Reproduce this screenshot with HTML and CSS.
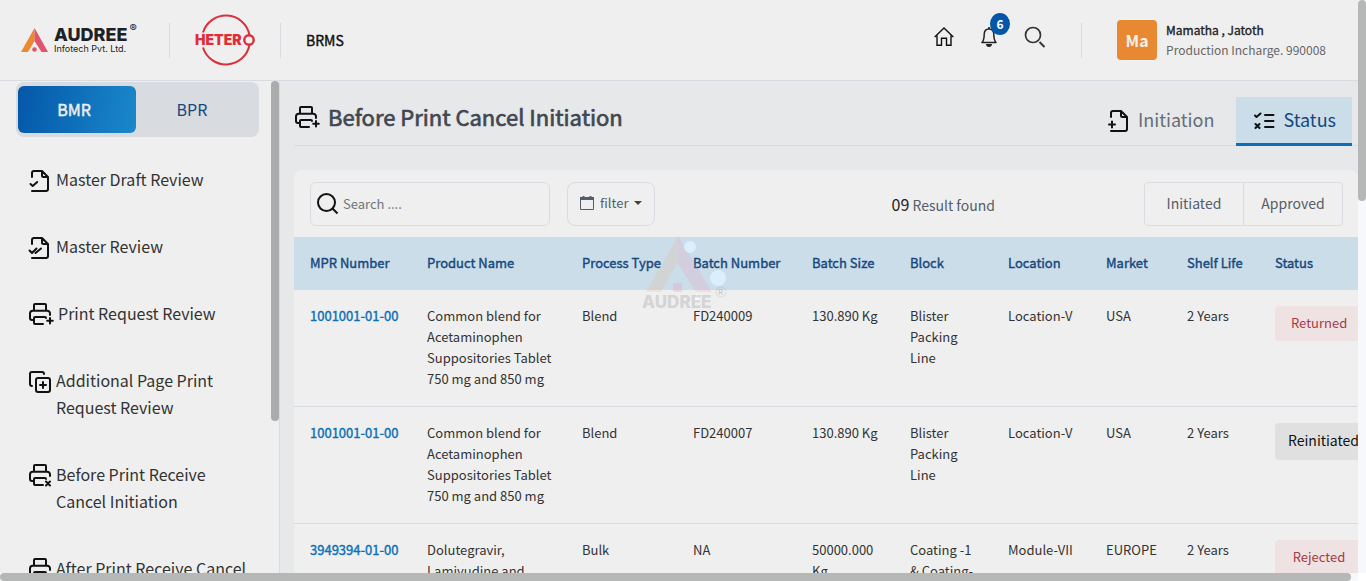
FILE: index.html
```html
<!DOCTYPE html>
<html lang="en">
<head>
<meta charset="utf-8">
<title>BRMS - Before Print Cancel Initiation</title>
<link rel="stylesheet" href="styles.css">
</head>
<body>
<svg class="defs" aria-hidden="true">
  <symbol id="printer" viewBox="0 0 26 24">
    <path d="M6 7.500V3a1 1 0 0 1 1-1h10a1 1 0 0 1 1 1v4.500M4.500 18H4a2 2 0 0 1-2-2v-4.500A2.800 2.800 0 0 1 4.800 8.700h14.400A2.800 2.800 0 0 1 22 11.500V13M15 22H7a1 1 0 0 1-1-1v-5a1 1 0 0 1 1-1h10a1 1 0 0 1 1 1"/>
  </symbol>
  <symbol id="file" viewBox="0 0 24 26">
    <path d="M4 9V5a2 2 0 0 1 2-2h8l6 6v12a2 2 0 0 1-2 2H4M14 3v4.500a1.500 1.500 0 0 0 1.500 1.500H20"/>
  </symbol>
</svg>
<div class="window">
  <div class="app">
    <header class="topbar">
      <a class="audree" href="#" aria-label="Audree Infotech">
        <svg class="audree-mark" viewBox="0 0 27 24"><path fill="#e98a30" d="M13.500 0v13L7 24H0z"/><path fill="#e2546b" d="M13.500 0 27 24h-6.500l-7-11z"/><circle cx="13.500" cy="21.500" r="2.300" fill="#e2546b"/></svg>
        <span class="audree-words"><span class="audree-name">AUDREE<sup>®</sup></span><span class="audree-sub">Infotech Pvt. Ltd.</span></span>
      </a>
      <span class="rule"></span>
      <a class="hetero" href="#" aria-label="Hetero">
        <svg viewBox="0 0 62 52"><g fill="none" stroke="#dc2f3a" stroke-width="2"><path d="M9 18.500A24 24 0 0 1 55.500 21M9 33.500A24 24 0 0 0 55.500 31"/><circle cx="55" cy="26" r="4.700" stroke-width="2.400"/></g><text class="hetero-text" x="1" y="31">HETER</text></svg>
      </a>
      <span class="rule"></span>
      <span class="product heavy">BRMS</span>
      <nav class="tools">
        <a href="#" aria-label="Home"><svg width="20" height="20" viewBox="0 0 20 20"><path fill="none" stroke="#111" stroke-width="1.400" d="M.7 10 10 1l9.300 9M3 8.500V18.300h4.500v-7h5v7H17V8.500"/></svg></a>
        <a class="bell" href="#" aria-label="Notifications, 6"><svg width="16" height="20" viewBox="0 0 16 20"><path fill="none" stroke="#222" stroke-width="1.500" stroke-linejoin="round" d="M8 2C4.800 2 3.200 4.500 3.200 7.500 3.200 12 2.300 14 1 15.500h14C13.700 14 12.800 12 12.800 7.500 12.800 4.500 11.200 2 8 2z"/><path fill="#222" d="M7.200 0h1.600v2H7.200zM5 17h6c0 2-1.300 3-3 3s-3-1-3-3z"/></svg><span class="badge">6</span></a>
        <a href="#" aria-label="Search"><svg width="22" height="22" viewBox="0 0 22 22"><g fill="none" stroke="#333" stroke-width="1.700"><circle cx="9" cy="9" r="7.500"/><path stroke-width="2" d="m15.500 16 5 5"/></g></svg></a>
      </nav>
      <span class="rule"></span>
      <div class="user">
        <span class="avatar">Ma</span>
        <span class="user-words"><span class="user-name heavy">Mamatha , Jatoth</span><span class="user-role">Production Incharge. 990008</span></span>
      </div>
    </header>
    <div class="body">
      <aside class="sidebar">
        <div class="side-main">
          <div class="switch"><button class="on heavy">BMR</button><button>BPR</button></div>
          <nav class="menu">
            <a href="#"><svg class="ico" width="28" height="26" viewBox="0 0 28 26"><use href="#file" width="24" height="26"/><path d="m2.500 16 2.200 2 4.500-4"/></svg>Master Draft Review</a>
            <a href="#"><svg class="ico" width="28" height="26" viewBox="0 0 28 26"><use href="#file" width="24" height="26"/><path d="m1.500 15.500 2.500 2.500 4.500-4.500M7.500 18l5.500-4.500"/></svg>Master Review</a>
            <a class="wide" href="#"><svg class="ico" width="28" height="26" viewBox="0 0 28 26"><use href="#printer" width="26" height="24"/><path d="M22 16v5.500M19.200 18.800h5.600"/></svg>Print Request Review</a>
            <a href="#"><svg class="ico" width="28" height="26" viewBox="0 0 28 26"><path d="M4 17a2 2 0 0 1-2-2V5a2 2 0 0 1 2-2h10a2 2 0 0 1 2 2"/><rect x="8" y="9" width="14" height="14" rx="2"/><path d="M15 13v6M12 16h6"/></svg>Additional Page Print Request Review</a>
            <a href="#"><svg class="ico" width="28" height="26" viewBox="0 0 28 26"><use href="#printer" width="26" height="24"/><path d="m18 18.500 4 4m0-4-4 4"/></svg>Before Print Receive Cancel Initiation</a>
            <a href="#"><svg class="ico" width="28" height="26" viewBox="0 0 28 26"><use href="#printer" width="26" height="24"/><path d="m18 18.500 4 4m0-4-4 4"/></svg>After Print Receive Cancel Initiation</a>
          </nav>
        </div>
        <div class="side-scroll"></div>
      </aside>
      <main class="content">
        <div class="title-row">
          <h1 class="heavy"><svg class="ico" width="28" height="26" viewBox="0 0 28 26"><use href="#printer" width="26" height="24"/><path d="M22 16v5.500M19.200 18.800h5.600"/></svg>Before Print Cancel Initiation</h1>
          <nav class="tabs">
            <a href="#"><svg class="ico" width="24" height="26" viewBox="0 0 24 26"><use href="#file" width="24" height="26"/><path d="M5 13.500v6M2 16.500h6"/></svg>Initiation</a>
            <a class="current" href="#"><svg class="ico" width="24" height="20" viewBox="0 0 24 20"><path d="m3 4.500 1.500 1.500L8.500 2.500M3.500 13l4 4m0-4-4 4M13 4h8.500M13 10h8.500M13 16h8.500"/></svg>Status</a>
          </nav>
        </div>
        <section class="card">
          <div class="filters">
            <label class="search"><svg width="22" height="22" viewBox="0 0 22 22"><g fill="none" stroke="#111" stroke-width="2"><circle cx="9.500" cy="9.500" r="8.500"/><path d="m15.500 15.500 5 5"/></g></svg><input type="text" placeholder="Search ...." aria-label="Search"></label>
            <button class="filter"><svg width="14" height="14" viewBox="0 0 14 14"><path fill="none" stroke="#555d68" d="M.5 1.500h13v12H.5z"/><path fill="#555d68" d="M0 1h14v3H0zM2.500 0h2v2h-2zM9.500 0h2v2h-2z"/></svg>filter<span class="caret"></span></button>
            <p class="result"><span>09</span> Result found</p>
            <div class="pair"><button>Initiated</button><button>Approved</button></div>
          </div>
          <table>
            <colgroup><col class="c-mpr"><col class="c-product"><col class="c-process"><col class="c-batch"><col class="c-mid"><col class="c-mid"><col class="c-mid"><col class="c-market"><col class="c-shelf"><col></colgroup>
            <thead><tr class="heavy"><th>MPR Number</th><th>Product Name</th><th>Process Type</th><th>Batch Number</th><th>Batch Size</th><th>Block</th><th>Location</th><th>Market</th><th>Shelf Life</th><th>Status</th></tr></thead>
            <tbody>
              <tr><td><a class="heavy" href="#">1001001-01-00</a></td><td>Common blend for Acetaminophen Suppositories Tablet 750 mg and 850 mg</td><td>Blend</td><td>FD240009</td><td>130.890 Kg</td><td>Blister Packing Line</td><td>Location-V</td><td>USA</td><td>2 Years</td><td><span class="pill red">Returned</span></td></tr>
              <tr><td><a class="heavy" href="#">1001001-01-00</a></td><td>Common blend for Acetaminophen Suppositories Tablet 750 mg and 850 mg</td><td>Blend</td><td>FD240007</td><td>130.890 Kg</td><td>Blister Packing Line</td><td>Location-V</td><td>USA</td><td>2 Years</td><td><span class="pill grey">Reinitiated</span></td></tr>
              <tr><td><a class="heavy" href="#">3949394-01-00</a></td><td>Dolutegravir, Lamivudine and</td><td>Bulk</td><td>NA</td><td>50000.000 Kg</td><td>Coating -1 &amp;&nbsp;Coating-</td><td>Module-VII</td><td>EUROPE</td><td>2 Years</td><td><span class="pill red">Rejected</span></td></tr>
            </tbody>
          </table>
        </section>
      </main>
    </div>
    <svg class="watermark" width="88" height="76" viewBox="0 0 88 76" aria-hidden="true">
      <path fill="#f3a56a" opacity=".16" d="M36 0v26L19 56H4z"/><path fill="#f58aa8" opacity=".18" d="m36 0 34 56H54L36 28z"/><path fill="#f58aa8" opacity=".25" d="M31 47h9v9h-9z"/>
      <g fill="#dff2ff" opacity=".8"><circle cx="48" cy="11" r="6"/><circle cx="76" cy="42" r="8"/></g><path fill="#fff" opacity=".7" d="m55 56 3 9h-6z"/>
      <text class="mark-name" x="0" y="72">AUDREE</text><circle cx="79" cy="56" r="5" fill="none" stroke="#888" opacity=".2"/><text class="mark-r" x="76" y="59">R</text>
    </svg>
  </div>
  <div class="vtrack"><div class="vthumb"></div></div>
  <div class="htrack"><div class="hthumb"></div></div>
</div>
</body>
</html>
```
FILE: styles.css
```css
* { box-sizing: border-box; }
body { margin: 0; font-family: "Noto Sans CJK SC", "Noto Sans", sans-serif; font-size: 12px; color: #333; background: #fff; }
a { color: inherit; text-decoration: none; }
button, input { font: inherit; color: inherit; background: none; border: 0; padding: 0; margin: 0; }
.heavy { -webkit-text-stroke: 0.03em currentColor; }
.defs { position: absolute; width: 0; height: 0; }
.ico { flex: none; fill: none; stroke: #111; stroke-width: 2; stroke-linecap: round; stroke-linejoin: round; }

.window { display: grid; grid-template-columns: minmax(0, 1fr) 8px; grid-template-rows: minmax(0, 1fr) 8px; height: 100vh; overflow: hidden; }
.app { position: relative; display: flex; flex-direction: column; overflow: hidden; background: #e6e8ea; }
.vtrack, .htrack { background: #f6f8fb; }
.vthumb { height: 35%; background: #b5b8b7; border-radius: 4px; }
.hthumb { width: 99.5%; height: 8px; background: #b5b8b7; border-radius: 4px; }
.htrack { grid-column: 1; }

.topbar { flex: none; display: flex; align-items: center; height: 81px; padding: 0 32px 0 21px; background: #efefef; border-bottom: 1px solid #d8dbe1; }
.rule { width: 1px; height: 35px; background: #d8dbe1; }
.audree { display: flex; align-items: center; gap: 6px; width: 148px; color: #1f2224; font-family: Inter, sans-serif; }
.audree-mark { width: 27px; height: 24px; }
.audree-words { display: flex; flex-direction: column; padding-top: 2px; }
.audree-name { font-size: 18px; font-weight: 800; line-height: 16px; white-space: nowrap; }
.audree-name sup { padding-left: 2px; font-size: 11px; font-weight: 500; line-height: 0; vertical-align: 9px; }
.audree-sub { font-size: 9px; line-height: 12px; }
.hetero { margin: 0 24px; }
.hetero svg { display: block; width: 62px; height: 52px; }
.hetero-text { font: 900 14px Inter, sans-serif; fill: #dc2f3a; }
.product { margin-left: 25px; font-size: 14px; color: #111; }
.tools { display: flex; align-items: center; gap: 27px; margin: 0 35px 6px auto; }
.tools a { position: relative; display: block; }
.tools svg { display: block; }
.badge { position: absolute; left: 9px; top: -14px; width: 20px; height: 22px; border-radius: 50%; background: #0457a8; color: #fff; font-size: 12px; font-weight: 700; line-height: 22px; text-align: center; }
.user { display: flex; align-items: center; gap: 9px; margin-left: 35px; }
.avatar { width: 40px; height: 40px; border-radius: 4px; background: #e88830; color: #f3efeb; font-size: 16px; font-weight: 700; line-height: 40px; text-align: center; }
.user-words { display: flex; flex-direction: column; line-height: 20px; white-space: nowrap; }
.user-name { color: #222; }
.user-role { color: #666; }

.body { flex: 1; min-height: 0; display: flex; }
.sidebar { flex: none; width: 280px; display: flex; background: #efefef; border-right: 1px solid #d8dbe1; }
.side-main { flex: 1; padding: 1px 0 0 16px; }
.side-scroll { width: 8px; height: 340px; border-radius: 4px; background: #ababab; }
.switch { display: grid; grid-template-columns: 1fr 1fr; margin-right: 12px; padding: 4px 5px 4px 2px; border-radius: 8px; background: #d8dbe0; }
.switch button { height: 47px; padding: 0 6px 2px 0; border-radius: 6px; font-size: 16px; color: #15487c; }
.switch .on { background: linear-gradient(100deg, #0457a8, #1a88cb); color: #eee; }
.menu { display: flex; flex-direction: column; gap: 40px; padding: 29px 20px 0 12px; font-size: 16px; line-height: 27px; }
.menu a { display: flex; align-items: flex-start; }
.menu .ico { margin: 2px 0 -2px; }
.menu .wide { gap: 2px; }

.content { flex: 1; min-width: 0; padding: 16px 0 0 14px; }
.title-row { display: flex; justify-content: space-between; height: 49px; padding-right: 6px; border-bottom: 1px solid #d8dbe1; }
h1 { display: flex; align-items: center; gap: 6px; margin: 0 0 11px; font-size: 22px; font-weight: 400; color: #414750; }
h1 .ico { margin-top: 4px; }
.tabs { display: flex; font-size: 18px; color: #656d78; }
.tabs a { display: flex; align-items: center; gap: 7px; height: 49px; padding: 0 22px 5px 16px; }
.tabs .ico { margin-top: 4px; }
.tabs .current { padding: 0 16px 2px; background: #cbdde9; border-bottom: 3px solid #0d6fb8; color: #15487c; }
.card { margin-top: 24px; overflow: hidden; background: #efefef; border-radius: 8px 8px 0 0; }
.filters { display: flex; align-items: center; padding: 12px 15px 11px 16px; color: #555d68; font-size: 13px; }
.search { display: flex; align-items: center; gap: 4px; width: 240px; height: 44px; padding: 0 6px; border: 1px solid #d8dbe1; border-radius: 6px; }
.search input { flex: 1; min-width: 0; outline: 0; padding-bottom: 2px; }
.search input::placeholder { color: #70757a; opacity: 1; }
.filter { display: flex; align-items: center; gap: 6px; height: 44px; margin-left: 17px; padding: 0 12px 3px; border: 1px solid #d8dbe1; border-radius: 8px; }
.caret { border: 4px solid transparent; border-top-color: #444; border-bottom: 0; }
.result { margin: 0 auto; padding-left: 87px; font-size: 14px; }
.result span { color: #222; font-size: 16px; }
.pair { display: flex; width: 199px; height: 44px; border: 1px solid #d8dbe1; border-radius: 4px; font-size: 14px; }
.pair button { flex: 1; padding-bottom: 2px; }
.pair button + button { border-left: 1px solid #d8dbe1; }

table { width: 100%; table-layout: fixed; border-collapse: collapse; font-size: 13px; line-height: 21px; }
th, td { padding: 15px 0 17px 16px; text-align: left; vertical-align: top; font-weight: 400; }
th { background: #cbdde9; color: #15487c; white-space: nowrap; }
td { border-bottom: 1px solid #d8dbe1; }
td:nth-child(2) { padding-right: 8px; }
td:nth-child(5), td:nth-child(6) { padding-right: 12px; }
td:last-child { padding-top: 16px; }
td a { color: #0d6fb8; }
.c-mpr { width: 117px; }
.c-product { width: 155px; }
.c-process { width: 111px; }
.c-batch { width: 119px; }
.c-mid { width: 98px; }
.c-market { width: 81px; }
.c-shelf { width: 88px; }
.pill { display: inline-block; min-width: 88px; padding: 6px 16px 8px; border-radius: 4px; text-align: center; white-space: nowrap; font-size: 13px; }
.grey { padding: 7px 13px 9px; background: #e0e0e0; color: #111; font-size: 14px; }
.red { background: #efe2e2; color: #a63a46; }

.watermark { position: absolute; left: calc(50% - 37px); top: 236px; }
.mark-name { font: 800 17px Inter, sans-serif; fill: #888; opacity: .25; }
.mark-r { font: 8px Inter, sans-serif; fill: #888; opacity: .4; }
```
